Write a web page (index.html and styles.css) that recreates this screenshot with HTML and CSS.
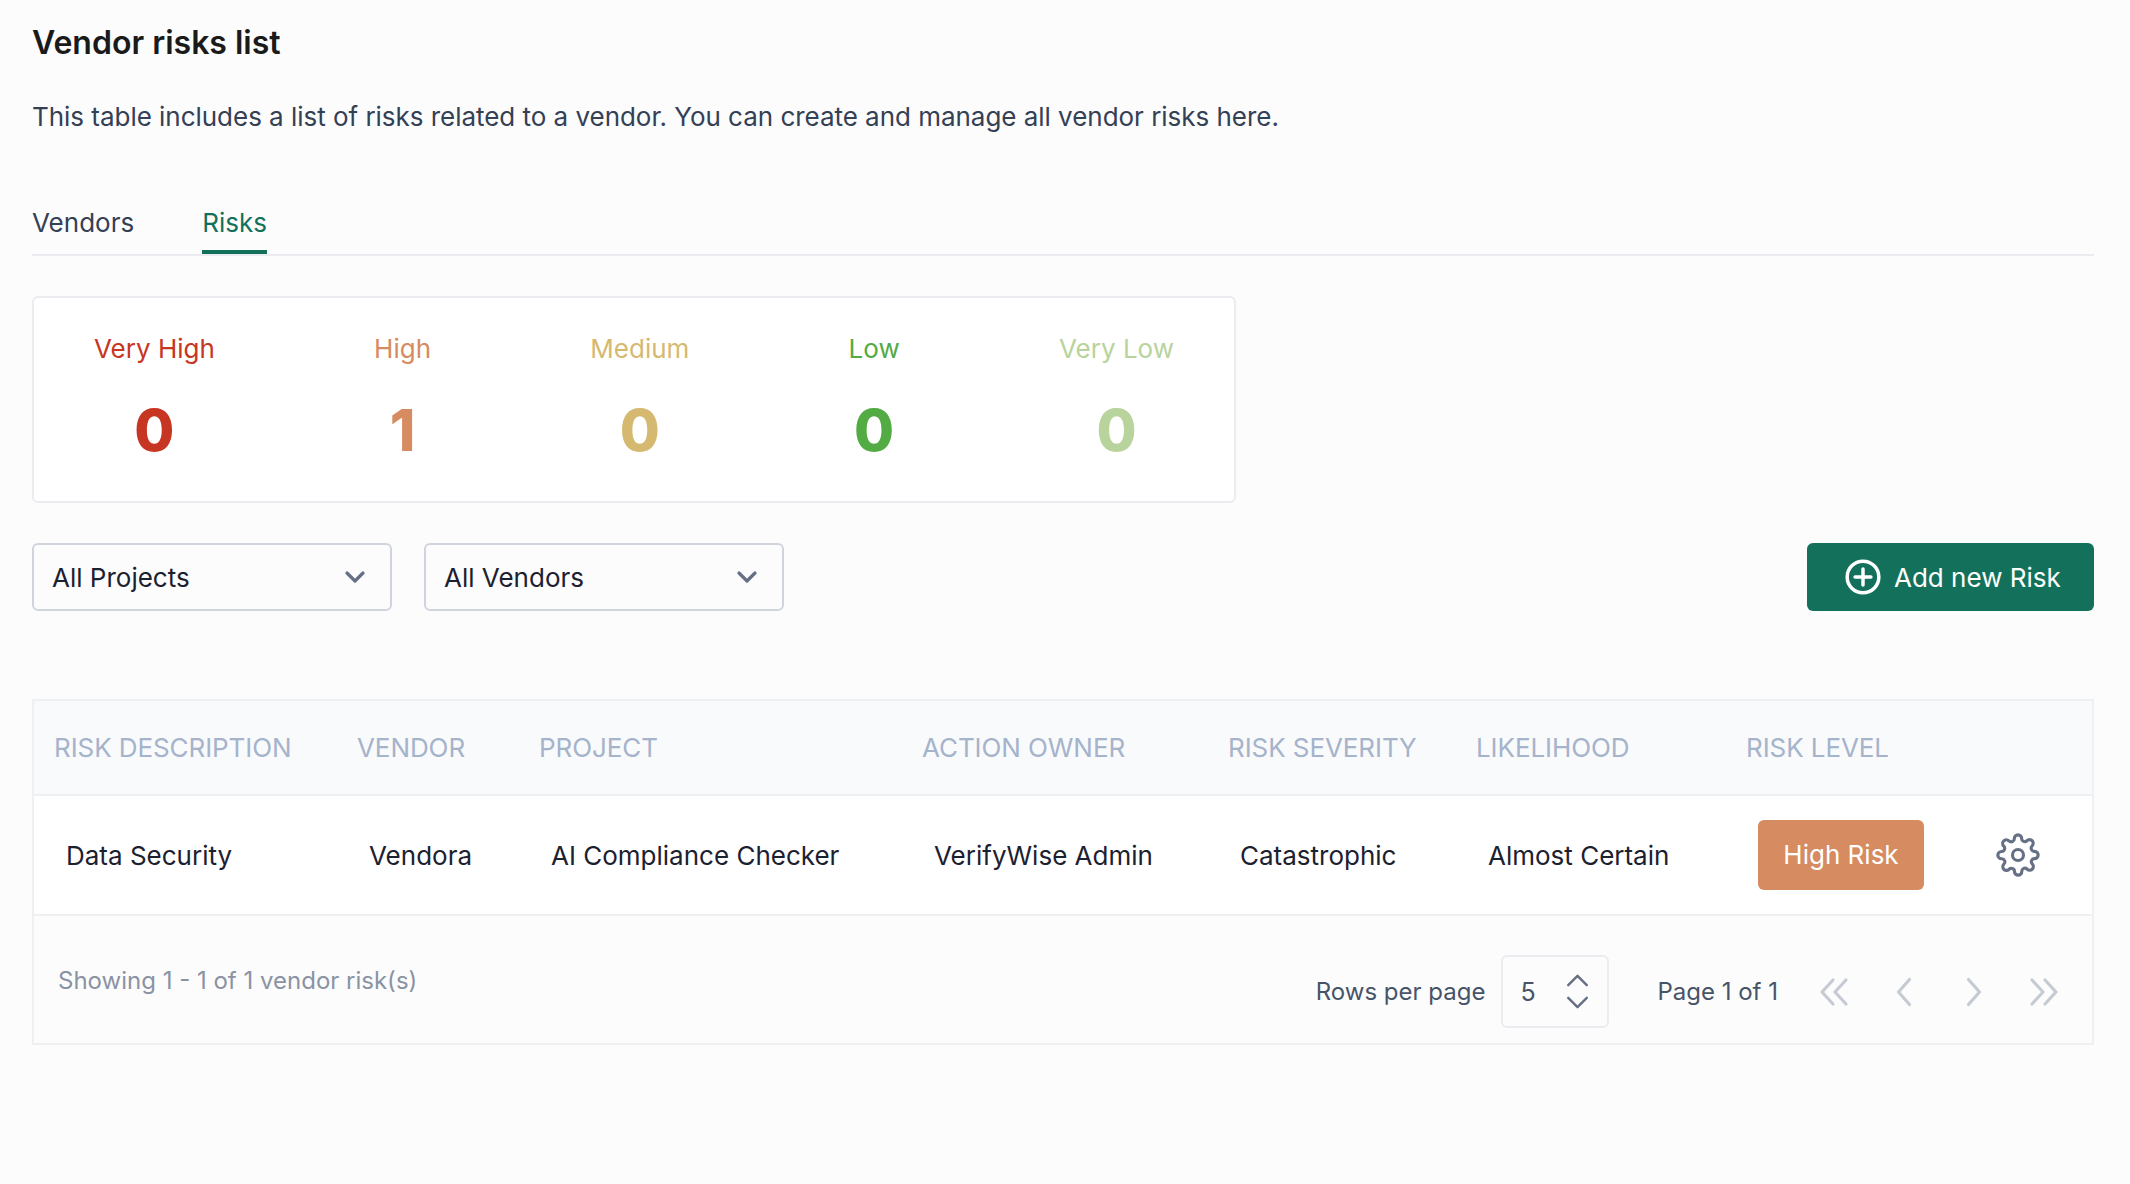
FILE: index.html
```html
<!DOCTYPE html>
<html lang="en">
<head>
<meta charset="utf-8">
<title>Vendor risks list</title>
<link rel="stylesheet" href="styles.css">
</head>
<body>
<main class="page">
  <h1 class="title">Vendor risks list</h1>
  <p class="intro">This table includes a list of risks related to a vendor. You can create and manage all vendor risks here.</p>
  <nav class="tabs">
    <span class="tab">Vendors</span>
    <span class="tab tab-active">Risks</span>
  </nav>
  <section class="summary">
    <div class="stat stat-vh"><span class="stat-label">Very High</span><span class="stat-num">0</span></div>
    <div class="stat stat-h"><span class="stat-label">High</span><span class="stat-num">1</span></div>
    <div class="stat stat-m"><span class="stat-label">Medium</span><span class="stat-num">0</span></div>
    <div class="stat stat-l"><span class="stat-label">Low</span><span class="stat-num">0</span></div>
    <div class="stat stat-vl"><span class="stat-label">Very Low</span><span class="stat-num">0</span></div>
  </section>
  <div class="toolbar">
    <div class="select"><span>All Projects</span>
      <svg class="chev" viewBox="0 0 24 24"><path d="M6 9l6 6 6-6"/></svg></div>
    <div class="select"><span>All Vendors</span>
      <svg class="chev" viewBox="0 0 24 24"><path d="M6 9l6 6 6-6"/></svg></div>
    <button class="add"><svg class="plus" viewBox="0 0 24 24"><circle cx="12" cy="12" r="10"/><path d="M12 7v10M7 12h10"/></svg>Add new Risk</button>
  </div>
  <section class="table-wrap">
    <table class="grid">
      <colgroup><col class="c1"><col class="c2"><col class="c3"><col class="c4"><col class="c5"><col class="c6"><col class="c7"><col></colgroup>
      <thead><tr><th>RISK DESCRIPTION</th><th>VENDOR</th><th>PROJECT</th><th>ACTION OWNER</th><th>RISK SEVERITY</th><th>LIKELIHOOD</th><th>RISK LEVEL</th><th></th></tr></thead>
      <tbody><tr>
        <td>Data Security</td><td>Vendora</td><td>AI Compliance Checker</td><td>VerifyWise Admin</td><td>Catastrophic</td><td>Almost Certain</td>
        <td><span class="badge">High Risk</span></td>
        <td class="gear-cell"><svg class="gear" viewBox="0 0 24 24"><circle cx="12" cy="12" r="3"/><path d="M19.4 15a1.65 1.65 0 0 0 .33 1.82l.06.06a2 2 0 1 1-2.83 2.83l-.06-.06a1.65 1.65 0 0 0-1.82-.33 1.65 1.65 0 0 0-1 1.51V21a2 2 0 1 1-4 0v-.09A1.65 1.65 0 0 0 9 19.4a1.65 1.65 0 0 0-1.82.33l-.06.06a2 2 0 1 1-2.83-2.83l.06-.06a1.65 1.65 0 0 0 .33-1.82 1.65 1.65 0 0 0-1.51-1H3a2 2 0 1 1 0-4h.09A1.65 1.65 0 0 0 4.6 9a1.65 1.65 0 0 0-.33-1.82l-.06-.06a2 2 0 1 1 2.83-2.83l.06.06a1.65 1.65 0 0 0 1.82.33H9a1.65 1.65 0 0 0 1-1.51V3a2 2 0 1 1 4 0v.09a1.65 1.65 0 0 0 1 1.51 1.65 1.65 0 0 0 1.82-.33l.06-.06a2 2 0 1 1 2.83 2.83l-.06.06a1.65 1.65 0 0 0-.33 1.82V9a1.65 1.65 0 0 0 1.51 1H21a2 2 0 1 1 0 4h-.09a1.65 1.65 0 0 0-1.51 1z"/></svg></td>
      </tr></tbody>
    </table>
    <footer class="foot">
      <span class="showing">Showing 1 - 1 of 1 vendor risk(s)</span>
      <div class="pager">
        <span class="rows-label">Rows per page</span>
        <div class="rows-box"><span>5</span>
          <span class="updown">
            <svg viewBox="0 0 24 14"><path d="M2 12l10-10 10 10"/></svg>
            <svg viewBox="0 0 24 14"><path d="M2 2l10 10 10-10"/></svg>
          </span></div>
        <span class="page-label">Page 1 of 1</span>
        <div class="nav-icons">
          <svg viewBox="0 0 34 34"><path d="M16 5L5 17l11 12M29 5L18 17l11 12"/></svg>
          <svg viewBox="0 0 34 34"><path d="M22.5 4.5L11.5 17l11 12.5"/></svg>
          <svg viewBox="0 0 34 34"><path d="M11.5 4.5L22.5 17l-11 12.5"/></svg>
          <svg viewBox="0 0 34 34"><path d="M5 5l11 12L5 29M18 5l11 12-11 12"/></svg>
        </div>
      </div>
    </footer>
  </section>
</main>
</body>
</html>
```

FILE: styles.css
```css
* { box-sizing: border-box; }
html, body { margin: 0; background: #fcfcfd; }
body { font-family: Inter, "Liberation Sans", sans-serif; font-size: 26px; color: #344054; }
.page { padding: 24px 36px 0 32px; min-height: 1184px; }
.title { margin: 0; font-size: 32px; line-height: 38px; font-weight: 600; color: #1a1a1a; }
.intro { margin: 37px 0 0; font-size: 26px; line-height: 36px; letter-spacing: -0.03px; }
.tabs { display: flex; gap: 68px; margin-top: 65px; height: 56px; border-bottom: 2px solid #eaecf0; }
.tab { height: 54px; padding-top: 6px; line-height: 34px; color: #344054; }
.tab-active { color: #13715b; border-bottom: 4px solid #13715b; }
.summary { display: flex; justify-content: space-between; width: 1204px; height: 207px; margin-top: 40px; padding: 33px 60px 0; background: #fff; border: 2px solid #eaecf0; border-radius: 6px; }
.stat { display: flex; flex-direction: column; align-items: center; }
.stat-label { font-size: 26px; line-height: 36px; }
.stat-num { margin-top: 28px; font-size: 58px; line-height: 70px; font-weight: 800; }
.stat-vh { color: #c63622; }
.stat-h { color: #d68b61; }
.stat-m { color: #d6b971; }
.stat-l { color: #52ab43; }
.stat-vl { color: #b8d39c; }
.toolbar { display: flex; gap: 32px; align-items: stretch; height: 68px; margin-top: 40px; }
.select { display: flex; align-items: center; justify-content: space-between; width: 360px; padding: 0 19px 0 18px; border: 2px solid #d0d5dd; border-radius: 6px; color: #1c2130; }
.chev { width: 32px; height: 32px; fill: none; stroke: #667085; stroke-width: 2.4; stroke-linecap: round; stroke-linejoin: round; }
.add { display: flex; align-items: center; gap: 12px; margin-left: auto; width: 287px; padding: 0 0 0 37px; background: #13715b; color: #fff; border: 0; border-radius: 6px; font: inherit; }
.plus { width: 38px; height: 38px; fill: none; stroke: #fff; stroke-width: 2.2; stroke-linecap: round; }
.table-wrap { margin-top: 88px; width: 2062px; height: 346px; border: 2px solid #eff0f2; }
.grid { width: 100%; border-collapse: collapse; table-layout: fixed; }
.c1 { width: 303px; }
.c2 { width: 182px; }
.c3 { width: 383px; }
.c4 { width: 306px; }
.c5 { width: 248px; }
.c6 { width: 270px; }
.c7 { width: 268px; }
th { height: 94px; padding: 0 0 0 20px; background: #f9fafb; text-align: left; font-weight: 400; letter-spacing: -0.08px; color: #a5b3cb; white-space: nowrap; border-bottom: 2px solid #eff0f2; }
td { height: 120px; padding: 0 0 0 32px; background: #fff; color: #1c2130; white-space: nowrap; border-bottom: 2px solid #eff0f2; }
.badge { display: inline-block; width: 166px; height: 70px; line-height: 70px; text-align: center; background: #d68b61; color: #fff; border-radius: 6px; }
.gear-cell { padding: 0; }
.gear { display: block; width: 44px; height: 44px; margin-left: 2px; fill: none; stroke: #667085; stroke-width: 1.7; }
.foot { display: flex; justify-content: space-between; align-items: center; height: 128px; padding: 0 31px 0 24px; }
.showing { color: #8a93a3; font-size: 24px; }
.pager { display: flex; align-items: center; margin-top: 23px; color: #475467; font-size: 24px; }
.rows-box { display: flex; align-items: center; justify-content: space-between; width: 108px; height: 73px; margin: 0 48px 0 16px; padding: 0 18px 0 17px; border: 2px solid #eaecf0; border-radius: 6px; font-size: 25px; }
.updown { display: flex; flex-direction: column; gap: 9px; }
.updown svg { display: block; width: 23px; height: 13px; fill: none; stroke: #667085; stroke-width: 2.6; stroke-linecap: round; stroke-linejoin: round; }
.nav-icons { display: flex; gap: 36px; margin-left: 39px; }
.nav-icons svg { width: 34px; height: 34px; fill: none; stroke: #c5cad3; stroke-width: 3.2; stroke-linecap: round; stroke-linejoin: round; }
```
